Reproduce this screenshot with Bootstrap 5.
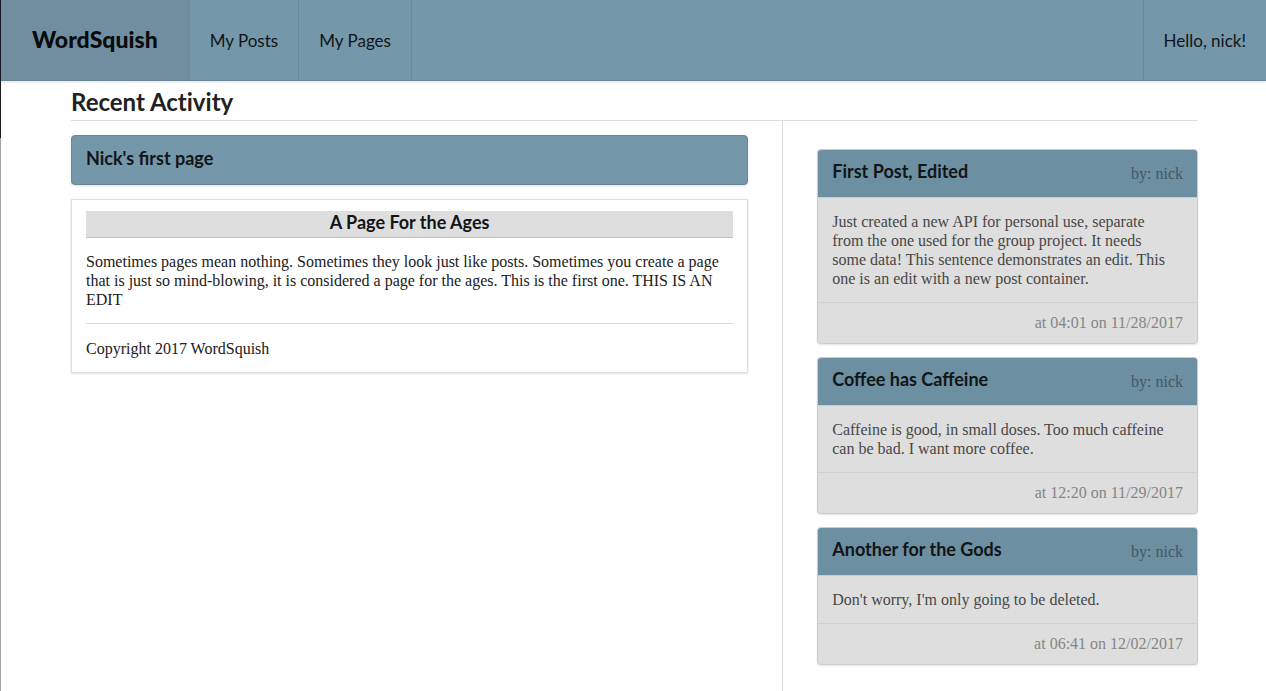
<!DOCTYPE html>
<html lang="en">
<head>
<meta charset="utf-8">
<meta name="viewport" content="width=device-width, initial-scale=1">
<title>WordSquish</title>
<link href="https://cdn.jsdelivr.net/npm/bootstrap@5.3.0/dist/css/bootstrap.min.css" rel="stylesheet">
<style>
  body {
    min-height: 100vh;
    padding-left: 1px;
    color: #212121;
    font-family: "Liberation Serif", serif;
    font-size: 16px;
    line-height: 19px;
    background: linear-gradient(#1c1820 138px, #a5a5a5 138px) left top / 1px 100% no-repeat #fff;
  }
  h1, h2, .topbar { font-family: Lato, sans-serif; }
  .topbar { background: #7497aa; border-bottom: 1px solid #688799; box-shadow: 0 1px 2px rgba(34, 36, 38, .15); }
  .topbar a { height: 80px; padding: 0 20px; font-size: 17px; color: #121517; text-decoration: none; border-right: 1px solid #6989a0; }
  .topbar .logo { padding: 0 31px 2px; background: #708ea0; color: #080a0b; font-size: 23px; font-weight: 900; }
  .topbar .account { border-right: 0; border-left: 1px solid #6989a0; }
  .wrap { padding: 0 68px 0 70px; }
  h1 { font-size: 24px; line-height: 30px; font-weight: 700; font-variant-ligatures: none; padding: 6px 0 3px; border-bottom: 1px solid #dededf; }
  h2 { font-size: 18px; line-height: 22px; font-weight: 700; margin: 0; color: #121517; }
  .main-col { width: 63.2%; padding: 14px 34px 14px 0; border-right: 1px solid #dededf; }
  .side-col { width: 36.8%; gap: 13px; padding: 28px 0 26px 34px; }
  .page-head { height: 50px; padding: 11px 14px; background: #7497aa; border: 1px solid #688799; border-radius: 4px; box-shadow: 0 1px 2px rgba(34, 36, 38, .15); }
  .page-box { margin-top: 14px; padding: 11px 14px 14px; border: 1px solid #dededf; box-shadow: 0 1px 2px rgba(34, 36, 38, .15); }
  .page-box h2 { padding: 0 0 4px; background: #dedede; border-bottom: 1px solid #c0c1c1; text-align: center; }
  .page-box p { margin: 14px 0; }
  .page-box footer { border-top: 1px solid #dededf; padding-top: 15px; }
  .post { background: #dedede; border: 1px solid #cbcccd; border-radius: 4px; box-shadow: 0 1px 2px rgba(34, 36, 38, .12); overflow: hidden; color: #474747; }
  .post header { height: 48px; padding: 10px 14px; background: #6c8fa1; border-bottom: 1px solid #c9cccd; }
  .post header span { color: #435863; padding-top: 4px; }
  .post p { padding: 14px 24px 14px 14px; margin: 0; border-bottom: 1px solid #d0d0d0; }
  .post footer { padding: 10px 14px 11px; text-align: right; color: #858585; }
</style>
</head>
<body class="d-flex flex-column">
<nav class="topbar d-flex">
  <a class="logo d-flex align-items-center" href="#">WordSquish</a>
  <a class="d-flex align-items-center" href="#">My Posts</a>
  <a class="d-flex align-items-center" href="#">My Pages</a>
  <a class="account d-flex align-items-center ms-auto" href="#">Hello, nick!</a>
</nav>
<main class="wrap d-flex flex-column flex-grow-1">
  <h1 class="m-0">Recent Activity</h1>
  <div class="d-flex flex-grow-1">
    <section class="main-col">
      <div class="page-head"><h2>Nick's first page</h2></div>
      <article class="page-box">
        <h2>A Page For the Ages</h2>
        <p>Sometimes pages mean nothing. Sometimes they look just like posts. Sometimes you create a page that is just so mind-blowing, it is considered a page for the ages. This is the first one. THIS IS AN EDIT</p>
        <footer>Copyright 2017 WordSquish</footer>
      </article>
    </section>
    <aside class="side-col d-flex flex-column">
      <article class="post">
        <header class="d-flex justify-content-between"><h2>First Post, Edited</h2><span>by: nick</span></header>
        <p>Just created a new API for personal use, separate from the one used for the group project. It needs some data! This sentence demonstrates an edit. This one is an edit with a new post container.</p>
        <footer>at 04:01 on 11/28/2017</footer>
      </article>
      <article class="post">
        <header class="d-flex justify-content-between"><h2>Coffee has Caffeine</h2><span>by: nick</span></header>
        <p>Caffeine is good, in small doses. Too much caffeine can be bad. I want more coffee.</p>
        <footer>at 12:20 on 11/29/2017</footer>
      </article>
      <article class="post">
        <header class="d-flex justify-content-between"><h2>Another for the Gods</h2><span>by: nick</span></header>
        <p>Don't worry, I'm only going to be deleted.</p>
        <footer>at 06:41 on 12/02/2017</footer>
      </article>
    </aside>
  </div>
</main>
<script src="https://cdn.jsdelivr.net/npm/bootstrap@5.3.0/dist/js/bootstrap.bundle.min.js"></script>
</body>
</html>
